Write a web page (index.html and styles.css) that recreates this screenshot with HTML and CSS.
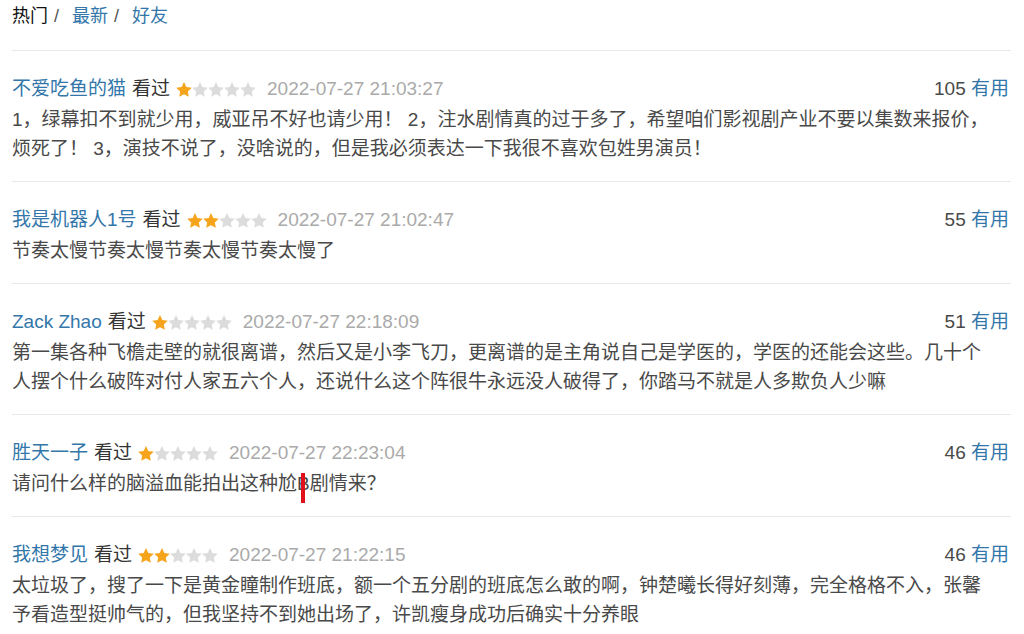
FILE: index.html
```html
<!DOCTYPE html>
<html lang="zh-CN">
<head>
    <meta charset="UTF-8">
    <meta name="viewport" content="width=device-width, initial-scale=1.0">
    <title>短评</title>
    <link rel="stylesheet" href="styles.css">
</head>
<body>
    <!-- star shape used by every rating -->
    <svg width="0" height="0" class="defs">
        <defs>
            <polygon id="star" points="8,0 10.35,4.96 15.8,5.67 11.8,9.44 12.82,14.83 8,12.2 3.18,14.83 4.2,9.44 0.2,5.67 5.65,4.96"/>
        </defs>
    </svg>

    <main class="comments">
        <!-- sort tabs -->
        <div class="tabs">
            <span class="tab on">热门</span><span class="sep">/</span>
            <a href="#" class="tab">最新</a><span class="sep">/</span>
            <a href="#" class="tab">好友</a>
        </div>

        <div class="item">
            <div class="head">
                <a href="#" class="user">不爱吃鱼的猫</a>
                <span class="seen">看过</span>
                <svg class="stars" viewBox="0 0 80 15"><use href="#star" class="lit"/><use href="#star" x="16"/><use href="#star" x="32"/><use href="#star" x="48"/><use href="#star" x="64"/></svg>
                <span class="time">2022-07-27 21:03:27</span>
                <span class="votes">105 <a href="#">有用</a></span>
            </div>
            <p class="text">1，绿幕扣不到就少用，威亚吊不好也请少用！ 2，注水剧情真的过于多了，希望咱们影视剧产业不要以集数来报价，烦死了！ 3，演技不说了，没啥说的，但是我必须表达一下我很不喜欢包姓男演员！</p>
        </div>

        <div class="item">
            <div class="head">
                <a href="#" class="user">我是机器人1号</a>
                <span class="seen">看过</span>
                <svg class="stars" viewBox="0 0 80 15"><use href="#star" class="lit"/><use href="#star" x="16" class="lit"/><use href="#star" x="32"/><use href="#star" x="48"/><use href="#star" x="64"/></svg>
                <span class="time">2022-07-27 21:02:47</span>
                <span class="votes">55 <a href="#">有用</a></span>
            </div>
            <p class="text">节奏太慢节奏太慢节奏太慢节奏太慢了</p>
        </div>

        <div class="item">
            <div class="head">
                <a href="#" class="user">Zack Zhao</a>
                <span class="seen">看过</span>
                <svg class="stars" viewBox="0 0 80 15"><use href="#star" class="lit"/><use href="#star" x="16"/><use href="#star" x="32"/><use href="#star" x="48"/><use href="#star" x="64"/></svg>
                <span class="time">2022-07-27 22:18:09</span>
                <span class="votes">51 <a href="#">有用</a></span>
            </div>
            <p class="text">第一集各种飞檐走壁的就很离谱，然后又是小李飞刀，更离谱的是主角说自己是学医的，学医的还能会这些。几十个人摆个什么破阵对付人家五六个人，还说什么这个阵很牛永远没人破得了，你踏马不就是人多欺负人少嘛</p>
        </div>

        <div class="item">
            <div class="head">
                <a href="#" class="user">胜天一子</a>
                <span class="seen">看过</span>
                <svg class="stars" viewBox="0 0 80 15"><use href="#star" class="lit"/><use href="#star" x="16"/><use href="#star" x="32"/><use href="#star" x="48"/><use href="#star" x="64"/></svg>
                <span class="time">2022-07-27 22:23:04</span>
                <span class="votes">46 <a href="#">有用</a></span>
            </div>
            <p class="text">请问什么样的脑溢血能拍出这种尬<span class="caret">B</span>剧情来？</p>
        </div>

        <div class="item">
            <div class="head">
                <a href="#" class="user">我想梦见</a>
                <span class="seen">看过</span>
                <svg class="stars" viewBox="0 0 80 15"><use href="#star" class="lit"/><use href="#star" x="16" class="lit"/><use href="#star" x="32"/><use href="#star" x="48"/><use href="#star" x="64"/></svg>
                <span class="time">2022-07-27 21:22:15</span>
                <span class="votes">46 <a href="#">有用</a></span>
            </div>
            <p class="text">太垃圾了，搜了一下是黄金瞳制作班底，额一个五分剧的班底怎么敢的啊，钟楚曦长得好刻薄，完全格格不入，张馨予看造型挺帅气的，但我坚持不到她出场了，许凯瘦身成功后确实十分养眼</p>
        </div>
    </main>
</body>
</html>
```

FILE: styles.css
```css
/* page basics */
body {
    margin: 0;
    background: #fff;
    font-family: "Liberation Sans", Arial, "Noto Sans CJK SC", sans-serif;
    color: #494949;
}
a {
    color: #3377aa;
    text-decoration: none;
}
.defs {
    position: absolute;
}
/* list wrapper */
.comments {
    padding: 2px 13px 0 12px;
}
/* sort tabs at the top */
.tabs {
    font-size: 18px;
    line-height: 28px;
    margin-bottom: 20px;
}
.tab.on {
    color: #111;
}
.sep {
    color: #555;
    margin: 0 8px 0 6px;
}
/* one comment */
.item {
    border-top: 1px solid #e8e8e8;
    padding: 24px 0 18px;
}
.head {
    display: flex;
    align-items: center;
    font-size: 19px;
    line-height: 28px;
}
.user {
    margin-right: 6px;
}
.seen {
    color: #333;
    margin-right: 6px;
}
.stars {
    flex: none;
    width: 80px;
    height: 15px;
    margin: 0 11px 0 0;
}
.stars use {
    fill: #dcdcdc;
}
.stars use.lit {
    fill: #f7a41d;
}
.time {
    color: #aaa;
}
.votes {
    margin-left: auto;
    margin-right: 2px;
    color: #494949;
}
/* comment body */
.text {
    margin: 2px 16px 0 0;
    font-size: 19px;
    line-height: 29px;
}
/* red text cursor over the letter */
.caret {
    position: relative;
}
.caret::before {
    content: "";
    position: absolute;
    left: 4px;
    top: 0;
    width: 4px;
    height: 30px;
    background: #e0111b;
}
```
